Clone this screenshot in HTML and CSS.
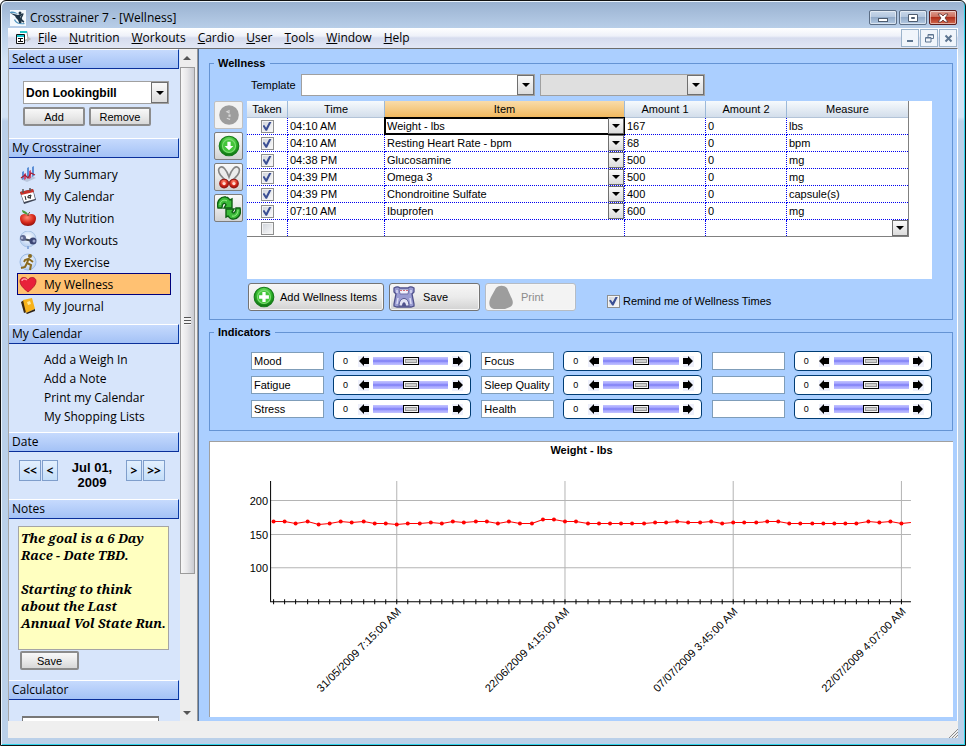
FILE: index.html
```html
<!DOCTYPE html>
<html lang="en">
<head>
    <meta charset="UTF-8">
    <meta name="viewport" content="width=device-width, initial-scale=1.0">
    <title>Crosstrainer 7 - [Wellness]</title>
    <link rel="stylesheet" href="styles.css">
</head>
<body>

    <!-- Shared icon shapes -->
    <svg class="defs" width="0" height="0">
        <defs>
            <symbol id="arrow-left" viewBox="0 0 10 10"><path d="M0 5 5 0v2h5v6H5v2z"/></symbol>
            <symbol id="arrow-right" viewBox="0 0 10 10"><path d="M10 5 5 0v2H0v6h5v2z"/></symbol>
            <radialGradient id="green" cx="50%" cy="30%" r="65%">
                <stop offset="0" stop-color="#8df07c"/>
                <stop offset="0.6" stop-color="#2fb52a"/>
                <stop offset="1" stop-color="#127a14"/>
            </radialGradient>
            <radialGradient id="red" cx="45%" cy="30%" r="70%">
                <stop offset="0" stop-color="#ff8a72"/>
                <stop offset="0.6" stop-color="#d82a1c"/>
                <stop offset="1" stop-color="#8e0f0c"/>
            </radialGradient>
            <radialGradient id="disc" cx="50%" cy="40%" r="60%">
                <stop offset="0" stop-color="#ffffff"/>
                <stop offset="1" stop-color="#b4cdf0"/>
            </radialGradient>
        </defs>
    </svg>

    <div class="window">

        <!-- Title bar -->
        <header class="titlebar">
            <svg class="app-icon" viewBox="0 0 16 16">
                <rect width="16" height="16" fill="#f4f9fd"/>
                <path d="M0 3l8 2 6-2-4 4c2 2 2 4 1 7l-2-1c0-2-1-3-3-5L5 6z" fill="#1f3547"/>
                <path d="M5 9c1 3 4 5 9 4l1 1c-5 1-9 0-11-4zM0 2c3-1 6 0 8 2-3-1-5-1-8-1z" fill="#4f93bd"/>
                <path d="M13 4l-2 4c0 2 1 3 3 4" fill="none" stroke="#1f3547" stroke-width="1.500"/>
                <circle cx="10" cy="3" r="1.500" fill="#1f3547"/>
            </svg>
            <span class="title">Crosstrainer 7 - [Wellness]</span>
            <div class="window-buttons">
                <button type="button" aria-label="Minimize"><svg viewBox="0 0 12 10"><rect x="1.5" y="5.5" width="9" height="3" fill="#fff" stroke="#4d5b6e"/></svg></button>
                <button type="button" aria-label="Maximize"><svg viewBox="0 0 12 10"><path d="M1.5 1.5h9v7h-9z" fill="#fff" stroke="#4d5b6e"/><path d="M4.500 4.500h3v1h-3z" fill="#9db4d0" stroke="#4d5b6e"/></svg></button>
                <button type="button" class="close" aria-label="Close"><svg viewBox="0 0 12 10"><path d="M1 1h3l2 2 2-2h3L8 5l3 4H8L6 7 4 9H1l3-4z" fill="#fff" stroke="#5a3030" stroke-width=".8"/></svg></button>
            </div>
        </header>

        <!-- Menu bar -->
        <nav class="menubar">
            <svg class="form-icon" viewBox="0 0 16 16">
                <path d="M5 1.500h7l1 8-4 1" fill="#fff" stroke="#9a9a9a"/>
                <path d="M5 1h7v2H5z" fill="#1fc4c4"/>
                <path d="M12 6l4 3-4 3z" fill="#b8b8b8"/>
                <path d="M1.500 4.500h8v9h-8z" fill="#fff" stroke="#111"/>
                <path d="M2 5h7v2H2z" fill="#16c7d0"/>
                <path d="M3 8.500h2m-2 3h2M6 8.500h2M6 11.500h2M5.500 8v4" stroke="#111"/>
            </svg>
            <a href="#"><u>F</u>ile</a>
            <a href="#"><u>N</u>utrition</a>
            <a href="#"><u>W</u>orkouts</a>
            <a href="#"><u>C</u>ardio</a>
            <a href="#"><u>U</u>ser</a>
            <a href="#"><u>T</u>ools</a>
            <a href="#"><u>W</u>indow</a>
            <a href="#"><u>H</u>elp</a>
            <div class="child-buttons">
                <button type="button" aria-label="Minimize form"><svg viewBox="0 0 9 9"><path d="M1 7h6" stroke="#5d7590" stroke-width="2"/></svg></button>
                <button type="button" aria-label="Restore form"><svg viewBox="0 0 9 9" fill="none" stroke="#5d7590"><path d="M3 3V.5h5.500v4H6M.500 3.500H6v4.500H.500zM3 1h5M1 4h5"/></svg></button>
                <button type="button" aria-label="Close form"><svg viewBox="0 0 9 9"><path d="M1.500 1.500l6 6m0-6l-6 6" stroke="#5d7590" stroke-width="2"/></svg></button>
            </div>
        </nav>

        <div class="content">

            <!-- Sidebar -->
            <aside class="sidebar">
                <h2>Select a user</h2>
                <section class="user">
                    <div class="combo user-combo">
                        <select aria-label="User"><option>Don Lookingbill</option></select>
                    </div>
                    <div class="user-buttons">
                        <button type="button" class="btn">Add</button>
                        <button type="button" class="btn">Remove</button>
                    </div>
                </section>

                <h2>My Crosstrainer</h2>
                <section class="nav-list">
                    <a href="#">
                        <svg viewBox="0 0 18 18"><path d="M1 14l10-4 6 3-9 4z" fill="#b9c6dc"/><path d="M3 7l2-1v8l-2 1zM8 3l2-1v10l-2 1zM13 2l2-1v10l-2 1z" fill="#5b8fd6"/><path d="M5 9l2-1v6l-2 1zM10 6l2-1v8l-2 1z" fill="#cf4a73"/><path d="M2 13l4-3 3 3 3-5 4 2" fill="none" stroke="#a51f32" stroke-width="1.300"/></svg>
                        My Summary
                    </a>
                    <a href="#">
                        <svg viewBox="0 0 18 18"><path d="M1 5l13-3 3 11-12 4z" fill="#3f4656"/><path d="M2 7l12-3 2 8-11 3z" fill="#fff"/><path d="M1 5l13-3 1 3L2 8z" fill="#c8322b"/><path d="M4 2v4M11 1v3" stroke="#555" stroke-width="1.500"/><path d="M6 9l1 4M9 9l3-1-1 4M9 9v2l2-1" fill="none" stroke="#222"/></svg>
                        My Calendar
                    </a>
                    <a href="#">
                        <svg viewBox="0 0 18 18"><path d="M9 6c3-2 8-1 8 3 0 5-3 8-8 8s-8-3-8-8c0-4 5-5 8-3z" fill="url(#red)"/><path d="M9 6c0-2-2-4-6-5 0 3 3 4 6 5z" fill="#4c9a3a"/><path d="M9 7c0-2 1-3 2-4" fill="none" stroke="#633517"/></svg>
                        My Nutrition
                    </a>
                    <a href="#">
                        <svg viewBox="0 0 18 18"><circle cx="9" cy="8" r="8" fill="url(#disc)" stroke="#aac4e6"/><path d="M4 8l10 2" stroke="#444c58" stroke-width="2"/><circle cx="4" cy="7" r="3" fill="#5d678f"/><circle cx="14" cy="10" r="3.500" fill="#3a4474"/><circle cx="3" cy="7" r="1.300" fill="#abb3d0"/><circle cx="15" cy="10" r="1.500" fill="#9aa4ca"/><path d="M9 15v3" stroke="#8aabdd" stroke-width="2"/></svg>
                        My Workouts
                    </a>
                    <a href="#">
                        <svg viewBox="0 0 18 18"><circle cx="9" cy="9" r="8" fill="url(#disc)" stroke="#9dbce6"/><circle cx="11" cy="3" r="2" fill="#8a6a1e"/><path d="M10 5l-2 5 4 2-1 5M8 10l-2 4-4 1M10 6l4 3M9 6L6 7 5 9" fill="none" stroke="#8a6a1e" stroke-width="2"/></svg>
                        My Exercise
                    </a>
                    <a href="#" class="selected">
                        <svg viewBox="0 0 18 18"><path d="M9 17C4 13 1 10 1 6c0-4 6-5 8-1 2-4 8-3 8 1 0 4-3 7-8 11z" fill="#e8213a" stroke="#a91425" stroke-width=".8"/><path d="M3 6c0-2 3-3 5-1" fill="none" stroke="#ff9ba6" stroke-width="1.500"/></svg>
                        My Wellness
                    </a>
                    <a href="#">
                        <svg viewBox="0 0 18 18"><path d="M2 5l3-2 3 12-3 1z" fill="#3c2a14"/><path d="M4 3l9-2 3 11-9 4z" fill="#f7b21a"/><path d="M7 16l9-4v2l-8 3z" fill="#2c2117"/><path d="M8 5l3-1 1 3-3 1z" fill="#ffe89a"/></svg>
                        My Journal
                    </a>
                </section>

                <h2>My Calendar</h2>
                <section class="link-list">
                    <a href="#">Add a Weigh In</a>
                    <a href="#">Add a Note</a>
                    <a href="#">Print my Calendar</a>
                    <a href="#">My Shopping Lists</a>
                </section>

                <h2>Date</h2>
                <section class="date">
                    <button type="button" class="wide">&lt;&lt;</button>
                    <button type="button">&lt;</button>
                    <strong>Jul 01, 2009</strong>
                    <button type="button">&gt;</button>
                    <button type="button" class="wide">&gt;&gt;</button>
                </section>

                <h2>Notes</h2>
                <section class="notes">
                    <textarea aria-label="Notes">The goal is a 6 Day Race - Date TBD.

Starting to think about the Last Annual Vol State Run.</textarea>
                    <button type="button" class="btn">Save</button>
                </section>

                <h2>Calculator</h2>
                <section class="calculator">
                    <input type="text" aria-label="Calculator">
                </section>
            </aside>

            <div class="scrollbar">
                <span class="scroll-up"></span>
                <div class="thumb"><span class="grip"></span></div>
                <span class="scroll-down"></span>
            </div>

            <!-- Main form -->
            <main class="main">
                <fieldset class="wellness">
                    <legend>Wellness</legend>
                    <div class="template-row">
                        <label for="template">Template</label>
                        <div class="combo template-combo">
                            <select id="template"><option></option></select>
                        </div>
                        <div class="combo disabled-combo">
                            <select aria-label="Template option"><option></option></select>
                        </div>
                    </div>

                    <div class="grid-row">
                        <div class="tools">
                            <button type="button" aria-label="Up" class="tool-off">
                                <svg viewBox="0 0 22 22"><circle cx="11" cy="11" r="9" fill="#9d9d9d"/><path d="M9 8l2-1v2zM11 11h1v1h-1zM9 14l3 1" stroke="#d8d8d8"/></svg>
                            </button>
                            <button type="button" aria-label="Down">
                                <svg viewBox="0 0 22 22"><circle cx="11" cy="11" r="9" fill="url(#green)" stroke="#167a1a"/><circle cx="11" cy="11" r="6" fill="#43c53a" stroke="#7edb74"/><path d="M9.500 7h3v4H15l-4 4-4-4h2.500z" fill="#fff"/></svg>
                            </button>
                            <button type="button" aria-label="Cut">
                                <svg viewBox="0 0 22 22"><path d="M11 16C4 12 0 6 2 3c3-4 7 2 9 8 2-6 6-12 9-8 2 3-2 9-9 13z" fill="#ececec" stroke="#858585" stroke-width="1.500"/><circle cx="6.500" cy="17" r="4" fill="url(#red)" stroke="#961812"/><circle cx="15.500" cy="17" r="4" fill="url(#red)" stroke="#961812"/><circle cx="6.500" cy="17" r="1.500" fill="#ffd9d0"/><circle cx="15.500" cy="17" r="1.500" fill="#ffd9d0"/></svg>
                            </button>
                            <button type="button" aria-label="Refresh">
                                <svg viewBox="0 0 24 24"><path d="M1 12C-1 5 4 0 9 1c2 0 3 2 4 3l2-1v9H7l2-3C8 6 5 7 5 12z" fill="#3dbb3a" stroke="#0d6112" stroke-width="1.400"/><path d="M23 12c2 7-3 12-8 11-2 0-3-2-4-3l-2 1v-8h8l-2 3c1 2 4 1 4-4z" fill="#3dbb3a" stroke="#0d6112" stroke-width="1.400"/><path d="M3 9c0-4 4-6 7-4M21 14c0 4-3 7-6 6" fill="none" stroke="#9af08c"/></svg>
                            </button>
                        </div>

                        <div class="grid-box">
                            <table class="grid">
                                <thead>
                                    <tr>
                                        <th class="col-taken">Taken</th>
                                        <th class="col-time">Time</th>
                                        <th class="col-item">Item</th>
                                        <th class="col-amount">Amount 1</th>
                                        <th class="col-amount">Amount 2</th>
                                        <th class="col-measure">Measure</th>
                                    </tr>
                                </thead>
                                <tbody>
                                    <tr>
                                        <td class="taken"><input type="checkbox" aria-label="Taken" checked></td>
                                        <td>04:10 AM</td>
                                        <td class="current"><div class="combo"><select aria-label="Item"><option>Weight - lbs</option></select></div></td>
                                        <td>167</td><td>0</td><td>lbs</td>
                                    </tr>
                                    <tr>
                                        <td class="taken"><input type="checkbox" aria-label="Taken" checked></td>
                                        <td>04:10 AM</td>
                                        <td><div class="combo"><select aria-label="Item"><option>Resting Heart Rate - bpm</option></select></div></td>
                                        <td>68</td><td>0</td><td>bpm</td>
                                    </tr>
                                    <tr>
                                        <td class="taken"><input type="checkbox" aria-label="Taken" checked></td>
                                        <td>04:38 PM</td>
                                        <td><div class="combo"><select aria-label="Item"><option>Glucosamine</option></select></div></td>
                                        <td>500</td><td>0</td><td>mg</td>
                                    </tr>
                                    <tr>
                                        <td class="taken"><input type="checkbox" aria-label="Taken" checked></td>
                                        <td>04:39 PM</td>
                                        <td><div class="combo"><select aria-label="Item"><option>Omega 3</option></select></div></td>
                                        <td>500</td><td>0</td><td>mg</td>
                                    </tr>
                                    <tr>
                                        <td class="taken"><input type="checkbox" aria-label="Taken" checked></td>
                                        <td>04:39 PM</td>
                                        <td><div class="combo"><select aria-label="Item"><option>Chondroitine Sulfate</option></select></div></td>
                                        <td>400</td><td>0</td><td>capsule(s)</td>
                                    </tr>
                                    <tr>
                                        <td class="taken"><input type="checkbox" aria-label="Taken" checked></td>
                                        <td>07:10 AM</td>
                                        <td><div class="combo"><select aria-label="Item"><option>Ibuprofen</option></select></div></td>
                                        <td>600</td><td>0</td><td>mg</td>
                                    </tr>
                                    <tr>
                                        <td class="taken"><input type="checkbox" aria-label="Taken"></td>
                                        <td></td><td></td><td></td><td></td>
                                        <td><div class="combo"><select aria-label="Measure"><option></option></select></div></td>
                                    </tr>
                                </tbody>
                            </table>
                        </div>
                    </div>

                    <div class="actions">
                        <button type="button" class="action add-items">
                            <svg viewBox="0 0 22 22"><circle cx="11" cy="11" r="9" fill="url(#green)" stroke="#167a1a"/><circle cx="11" cy="11" r="6" fill="#43c53a" stroke="#7edb74"/><path d="M9.500 6.500h3v3h3v3h-3v3h-3v-3h-3v-3h3z" fill="#fff"/></svg>
                            Add Wellness Items
                        </button>
                        <button type="button" class="action">
                            <svg viewBox="0 0 22 22"><path d="M1 2c3-2 5-1 6 0h8c1-1 3-2 6 0v4l-2 2 2 10v2l-3 1H4l-3-1v-2L3 8 1 6z" fill="#9a9cd2" stroke="#50528c" stroke-width="1.300"/><path d="M6 3h10l-1 5H7z" fill="#f1f0fb" stroke="#6f70aa"/><path d="M8 4v1m3-1v1m3-1v1" stroke="#c8434f" stroke-width="1.500"/><path d="M6 20c0-10 10-10 10 0z" fill="#e4e4f5" stroke="#50528c"/><path d="M9 20c0-5 4-5 4 0z" fill="#50528c"/><path d="M4 4v3M18 4v3M5 12l-1 6M17 12l1 6" stroke="#dcdcf4" stroke-width="1.500"/></svg>
                            Save
                        </button>
                        <button type="button" class="action off" disabled>
                            <svg viewBox="0 0 24 24"><path d="M7 3c3-3 8-3 11 0l4 9c3 5 2 9-1 10l-5 2H5c-5-1-6-6-3-12z" fill="#9d9d9d"/></svg>
                            Print
                        </button>
                        <label class="remind"><input type="checkbox" checked> Remind me of Wellness Times</label>
                    </div>
                </fieldset>

                <fieldset class="indicators">
                    <legend>Indicators</legend>
                    <div class="indicator-grid">
                        <div class="indicator">
                            <input type="text" aria-label="Indicator name" value="Mood">
                            <div class="slider"><span>0</span><button type="button" aria-label="Less"><svg><use href="#arrow-left"/></svg></button><input type="range" aria-label="Mood"><button type="button" aria-label="More"><svg><use href="#arrow-right"/></svg></button></div>
                        </div>
                        <div class="indicator">
                            <input type="text" aria-label="Indicator name" value="Focus">
                            <div class="slider"><span>0</span><button type="button" aria-label="Less"><svg><use href="#arrow-left"/></svg></button><input type="range" aria-label="Focus"><button type="button" aria-label="More"><svg><use href="#arrow-right"/></svg></button></div>
                        </div>
                        <div class="indicator">
                            <input type="text" aria-label="Indicator name">
                            <div class="slider"><span>0</span><button type="button" aria-label="Less"><svg><use href="#arrow-left"/></svg></button><input type="range" aria-label="Custom 1"><button type="button" aria-label="More"><svg><use href="#arrow-right"/></svg></button></div>
                        </div>
                        <div class="indicator">
                            <input type="text" aria-label="Indicator name" value="Fatigue">
                            <div class="slider"><span>0</span><button type="button" aria-label="Less"><svg><use href="#arrow-left"/></svg></button><input type="range" aria-label="Fatigue"><button type="button" aria-label="More"><svg><use href="#arrow-right"/></svg></button></div>
                        </div>
                        <div class="indicator">
                            <input type="text" aria-label="Indicator name" value="Sleep Quality">
                            <div class="slider"><span>0</span><button type="button" aria-label="Less"><svg><use href="#arrow-left"/></svg></button><input type="range" aria-label="Sleep Quality"><button type="button" aria-label="More"><svg><use href="#arrow-right"/></svg></button></div>
                        </div>
                        <div class="indicator">
                            <input type="text" aria-label="Indicator name">
                            <div class="slider"><span>0</span><button type="button" aria-label="Less"><svg><use href="#arrow-left"/></svg></button><input type="range" aria-label="Custom 2"><button type="button" aria-label="More"><svg><use href="#arrow-right"/></svg></button></div>
                        </div>
                        <div class="indicator">
                            <input type="text" aria-label="Indicator name" value="Stress">
                            <div class="slider"><span>0</span><button type="button" aria-label="Less"><svg><use href="#arrow-left"/></svg></button><input type="range" aria-label="Stress"><button type="button" aria-label="More"><svg><use href="#arrow-right"/></svg></button></div>
                        </div>
                        <div class="indicator">
                            <input type="text" aria-label="Indicator name" value="Health">
                            <div class="slider"><span>0</span><button type="button" aria-label="Less"><svg><use href="#arrow-left"/></svg></button><input type="range" aria-label="Health"><button type="button" aria-label="More"><svg><use href="#arrow-right"/></svg></button></div>
                        </div>
                        <div class="indicator">
                            <input type="text" aria-label="Indicator name">
                            <div class="slider"><span>0</span><button type="button" aria-label="Less"><svg><use href="#arrow-left"/></svg></button><input type="range" aria-label="Custom 3"><button type="button" aria-label="More"><svg><use href="#arrow-right"/></svg></button></div>
                        </div>
                    </div>
                </fieldset>

                <!-- Chart -->
                <div class="chart">
                    <h3>Weight - lbs</h3>
                    <svg id="plot" viewBox="0 0 742 258"></svg>
                </div>
            </main>
        </div>

        <!-- Status bar -->
        <footer class="statusbar">
            <svg viewBox="0 0 10 10"><path d="M1 10l9-9M4 10l6-6M7 10l3-3" stroke="#8a8a8a"/></svg>
        </footer>
    </div>

    <script>
        const weights = [
            169, 169, 166, 169, 165, 166, 169, 167, 169, 166, 166, 165, 166, 166, 167,
            166, 169, 167, 169, 169, 166, 169, 166, 166, 172, 172, 169, 169, 166, 166,
            166, 166, 166, 166, 167, 167, 169, 167, 167, 169, 166, 167, 167, 167, 169,
            169, 166, 166, 166, 166, 166, 166, 166, 169, 167, 169, 166
        ];
        const dates = {
            11: "31/05/2009 7:15:00 AM",
            26: "22/06/2009 4:15:00 AM",
            41: "07/07/2009 3:45:00 AM",
            56: "22/07/2009 4:07:00 AM"
        };
        const left = 60.5, right = 700, upper = 23, bottom = 143.5;
        const x = i => 63.5 + Math.round(i * 11.2);
        const y = lbs => Math.round(bottom - (lbs - 50) * 0.668) - 0.5;

        let out = "";

        // Grid lines and labels
        [100, 150, 200].forEach(v => {
            out += `<path class="line" d="M${left} ${y(v)}H${right}"/>`;
            out += `<text x="58" y="${y(v) + 4}" text-anchor="end">${v}</text>`;
        });
        for (const i in dates) {
            const px = x(i);
            out += `<path class="line" d="M${px} ${upper}V${bottom}"/>`;
            out += `<text text-anchor="end" transform="translate(${px + 5} 154) rotate(-45)">${dates[i]}</text>`;
        }

        // Axes and ticks
        out += `<path class="axis" d="M${left} ${upper}V${bottom}H${right}"/>`;
        weights.forEach((w, i) => out += `<path class="axis" d="M${x(i)} 141v5"/>`);

        // Weight line
        const points = weights.map((w, i) => `${x(i)},${y(w)}`).join(" ");
        out += `<polyline class="series" points="${points} ${right},${y(167)}"/>`;
        weights.forEach((w, i) => out += `<circle class="dot" cx="${x(i)}" cy="${y(w)}" r="2"/>`);

        document.getElementById("plot").innerHTML = out;
    </script>

</body>
</html>
```

FILE: styles.css
```css
/* General Styles */
* {
    box-sizing: border-box;
}

body {
    margin: 0;
    font: 11px "Liberation Sans", Arial, sans-serif;
    color: #000;
}

button, input, select, textarea {
    font: inherit;
    color: inherit;
    margin: 0;
}

button {
    display: flex;
    align-items: center;
    justify-content: center;
    padding: 0;
}

a {
    color: inherit;
    text-decoration: none;
}

.defs {
    position: absolute;
}

/* Window frame */
.window {
    display: flex;
    flex-direction: column;
    height: 100vh;
    min-height: 746px;
    padding: 0 7px 7px;
    border: 1px solid #111;
    border-radius: 6px 6px 0 0;
    background: linear-gradient(#99b1d0, #b9cfe9 28px, #d3e3f5 60px, #d3e3f5 116px, #bad0e9 120px);
    box-shadow: inset 1px 1px #eaf3fb, inset -1px -1px #2fd3ea;
}

/* Title bar */
.titlebar {
    display: flex;
    align-items: center;
    height: 27px;
    padding: 6px 1px 0 2px;
    font: 12px "Open Sans", sans-serif;
}

.app-icon {
    width: 16px;
    height: 16px;
    margin-right: 4px;
}

.window-buttons {
    display: flex;
    gap: 2px;
    margin-left: auto;
}

.window-buttons button {
    width: 28px;
    height: 15px;
    border: 1px solid #5b6d85;
    border-radius: 2px;
    background: linear-gradient(#c9d8ea, #b3c6de 48%, #92abc9 50%, #b4cae3);
    box-shadow: inset 0 0 0 1px rgba(255, 255, 255, 0.5);
}

.window-buttons .close {
    border-color: #5c1d1d;
    background: linear-gradient(#dd9f93, #cc6a58 48%, #b02f1b 50%, #d0694f);
}

.window-buttons svg {
    width: 12px;
    height: 10px;
}

/* Menu bar */
.menubar {
    display: flex;
    align-items: center;
    gap: 12px;
    height: 20px;
    padding: 0 1px 0 7px;
    background: linear-gradient(#fff, #eef1f9 40%, #d6dcee 50%, #e2e7f5);
    font: 12px/18px "Open Sans", sans-serif;
}

.form-icon {
    width: 16px;
    height: 16px;
    margin-right: -5px;
}

.child-buttons {
    display: flex;
    gap: 1px;
    margin-left: auto;
}

.child-buttons button {
    width: 18px;
    height: 18px;
    border: 1px solid #9bb3cb;
    background: #f0f5fb;
}

.child-buttons svg {
    width: 9px;
    height: 9px;
}

/* Content */
.content {
    display: flex;
    flex: 1;
    min-height: 0;
    border: 1px solid #a5a5a5;
    border-top-color: #6d6d6d;
    border-right-color: #fff;
    border-bottom: 0;
}

/* Sidebar */
.sidebar {
    width: 171px;
    overflow: hidden;
    background: #d7e5fb;
    font: 12px "Open Sans", sans-serif;
}

.sidebar h2 {
    height: 20px;
    margin: 0 1px 0 0;
    padding-left: 3px;
    border: 1px solid #fff;
    border-width: 1px 1px 1px 0;
    border-color: #fff #0a3aa5 #0a2f9a;
    background: linear-gradient(#c6dafd, #a4c2f6);
    font: 12px/18px "Open Sans", sans-serif;
}

.sidebar section a {
    display: flex;
    align-items: center;
}

.user {
    height: 69px;
    padding: 12px 11px 12px 14px;
}

/* Drop-downs, with the arrow button laid over the right end */
.combo {
    display: grid;
    grid-template-columns: 1fr 17px;
    border: 1px solid #a0a0a0;
}

.combo select {
    grid-area: 1 / 1 / 2 / 3;
    min-width: 0;
    padding: 0 2px;
    border: 0;
    border-radius: 0;
    background: #fff;
    appearance: none;
}

.combo::before {
    content: "";
    grid-area: 1 / 2;
    z-index: 1;
    border: 1px solid #6f6f6f;
    background: linear-gradient(#fafafa, #dcdcdc);
    pointer-events: none;
}

.combo::after {
    content: "";
    grid-area: 1 / 2;
    z-index: 2;
    place-self: center;
    border: 4px solid transparent;
    border-top-color: #000;
    border-bottom: 0;
    pointer-events: none;
}

.user-combo {
    height: 23px;
    font: bold 12px "Liberation Sans", Arial, sans-serif;
}

.user-buttons {
    display: flex;
    gap: 4px;
    margin-top: 3px;
}

.btn {
    width: 62px;
    height: 19px;
    border: 2px solid #8c8c8c;
    border-radius: 2px;
    background: linear-gradient(#f8f8f8, #eaeaea 50%, #d8d8d8);
    font: 11px "Liberation Sans", Arial, sans-serif;
}

.nav-list {
    padding: 5px 9px 7px 8px;
}

.nav-list a {
    gap: 7px;
    height: 22px;
    padding-left: 1px;
    border: 1px solid transparent;
}

.nav-list svg {
    width: 18px;
    height: 18px;
}

.nav-list .selected {
    border-color: #00007c;
    background: #ffc172;
}

.link-list {
    padding: 6px 0 6px 35px;
}

.link-list a {
    height: 19px;
}

.date {
    display: flex;
    gap: 1px;
    height: 47px;
    padding: 8px 15px 0 10px;
}

.date button {
    width: 16px;
    height: 21px;
    border: 1px solid #7f9ecb;
    background: linear-gradient(#e3f0fe, #c4def9);
    font: bold 12px "Open Sans", sans-serif;
}

.date .wide {
    width: 22px;
}

.date strong {
    flex: 1;
    padding: 0 8px;
    font: bold 13px/15px "Liberation Sans", Arial, sans-serif;
    text-align: center;
}

.notes {
    height: 161px;
    padding: 7px 11px 0 9px;
}

.notes textarea {
    display: block;
    width: 100%;
    height: 124px;
    padding: 3px 2px;
    border: 1px solid #a5a5a5;
    outline: 0;
    overflow: hidden;
    resize: none;
    background: #ffffc0;
    font: italic bold 13px/17px "Noto Serif", "Liberation Serif", serif;
}

.notes .btn {
    width: 59px;
    margin: 1px 0 0 2px;
}

.calculator {
    padding: 16px 21px 0 13px;
}

.calculator input {
    width: 100%;
    border: 1px solid #777;
    border-top-width: 2px;
}

/* Scrollbar */
.scrollbar {
    display: flex;
    flex-direction: column;
    align-items: center;
    width: 18px;
    padding: 7px 3px 6px 0;
    border-right: 1px solid #9a9a9a;
    background: #ededed;
}

.scroll-up, .scroll-down {
    border: 4px solid transparent;
}

.scroll-up {
    border-top: 0;
    border-bottom-color: #555;
}

.scroll-down {
    margin-top: auto;
    border-bottom: 0;
    border-top-color: #555;
}

.thumb {
    display: flex;
    align-items: center;
    justify-content: center;
    width: 15px;
    height: 77%;
    margin-top: 7px;
    border: 1px solid #9b9b9b;
    background: linear-gradient(90deg, #f7f7f7, #e8e8ea 45%, #c9cbd1);
}

.grip {
    width: 7px;
    height: 8px;
    background: repeating-linear-gradient(#555 0 1px, #f5f5f5 1px 3px);
}

/* Main form */
.main {
    display: flex;
    flex: 1;
    flex-direction: column;
    min-width: 0;
    padding: 7px 4px 4px 10px;
    border-left: 1px solid #4e6d97;
    background: #abcfff;
}

fieldset {
    min-width: 0;
    margin: 0;
    border: 1px solid #6594d4;
}

legend {
    height: 14px;
    padding: 0 4px;
    font-weight: bold;
    line-height: 14px;
}

.wellness {
    padding: 4px 20px 8px 4px;
}

.template-row {
    display: flex;
    align-items: center;
    padding-left: 37px;
}

.template-row label {
    width: 50px;
}

.template-row .combo {
    height: 22px;
}

.template-combo {
    width: 234px;
    margin-right: 5px;
}

.disabled-combo {
    width: 165px;
}

.disabled-combo select {
    background: #dfdfdf;
}

.grid-row {
    display: flex;
    gap: 4px;
    margin-top: 5px;
}

/* Tool buttons */
.tools {
    display: flex;
    flex-direction: column;
    gap: 3px;
}

.tools button {
    width: 29px;
    height: 28px;
    border: 1px solid #7d7d7d;
    border-radius: 2px;
    background: linear-gradient(#f9f9f9, #e9e9e9 50%, #d2d2d2);
}

.tools .tool-off {
    border-color: #c0c0c0;
    background: #f2f2f2;
}

.tools svg {
    width: 24px;
    height: 24px;
}

/* Grid */
.grid-box {
    flex: 1;
    height: 178px;
    padding-right: 23px;
    background: #fff;
}

.grid {
    width: 100%;
    table-layout: fixed;
    border-collapse: separate;
    border-spacing: 0;
    border-right: 1px solid #808080;
    border-bottom: 1px solid #808080;
}

.grid th {
    height: 17px;
    padding: 0;
    border-right: 1px solid #9db9d8;
    border-bottom: 1px solid #b3c4d8;
    background: linear-gradient(#f6fafd, #d3deeb);
    font-weight: normal;
}

.grid th:last-child, .grid td:last-child {
    border-right: 0;
}

.grid .col-item {
    background: linear-gradient(#f9dcaa, #f1b95f);
}

.col-taken {
    width: 41px;
}

.col-time {
    width: 97px;
}

.col-amount {
    width: 81px;
}

.col-measure {
    width: 121px;
}

.grid td {
    height: 17px;
    padding: 0 2px;
    border-right: 1px dotted #0000f0;
    border-bottom: 1px dotted #0000f0;
}

.grid tr:last-child td {
    height: 16px;
    border-bottom: 0;
}

.grid .taken {
    padding: 0;
    text-align: center;
}

.grid td:has(.combo) {
    padding: 0;
}

.grid .combo {
    grid-template-columns: 1fr 16px;
    height: 16px;
    border: 0;
}

.grid .current .combo {
    outline: 2px solid #000;
    outline-offset: -1px;
}

/* Tick boxes */
input[type="checkbox"] {
    display: inline-grid;
    place-content: center;
    width: 13px;
    height: 13px;
    border: 1px solid #8e8f8f;
    background: linear-gradient(135deg, #cfd3da, #fbfbfb);
    box-shadow: inset 0 0 0 1px #f4f4f4;
    vertical-align: middle;
    appearance: none;
}

input[type="checkbox"]:checked::before {
    content: "";
    width: 9px;
    height: 9px;
    background: #3b4f94;
    clip-path: polygon(0 45%, 20% 35%, 40% 65%, 75% 0, 100% 0, 50% 100%, 35% 100%);
}

/* Action buttons */
.actions {
    display: flex;
    align-items: center;
    gap: 5px;
    margin-top: 4px;
    padding-left: 34px;
}

.action {
    justify-content: flex-start;
    gap: 8px;
    width: 91px;
    height: 28px;
    padding-left: 3px;
    border: 1px solid #747474;
    border-radius: 3px;
    background: linear-gradient(#f6f6f6, #ebebeb 50%, #d2d2d2);
    box-shadow: inset 0 0 0 1px #f6f6f6;
}

.action svg {
    width: 22px;
    height: 22px;
}

.add-items {
    gap: 4px;
    width: 136px;
}

.add-items svg, .off svg {
    width: 24px;
    height: 24px;
}

.off {
    border-color: #b6bcc4;
    background: #f3f3f3;
    color: #8b8b8b;
}

.remind {
    display: flex;
    align-items: center;
    gap: 3px;
    margin: 8px 0 0 26px;
}

/* Indicators */
.indicators {
    margin-top: 5px;
    padding: 12px 20px 11px 4px;
}

.indicator-grid {
    display: grid;
    grid-template-columns: repeat(3, minmax(0, 1fr));
    gap: 4px 10px;
    padding-left: 37px;
}

.indicator {
    display: flex;
    align-items: center;
    gap: 9px;
}

.indicator input[type="text"] {
    width: 73px;
    height: 18px;
    padding: 0 2px;
    border: 1px solid #7f9db9;
    background: #fff;
}

.slider {
    display: flex;
    flex: 1;
    align-items: center;
    min-width: 0;
    height: 20px;
    padding: 0 7px 0 9px;
    border: 1px solid #003c74;
    border-radius: 4px;
    background: #fff;
}

.slider span {
    width: 15px;
    font-size: 9px;
}

.slider button {
    width: 11px;
    height: 11px;
    border: 0;
    background: #eef0fb;
}

.slider svg {
    width: 10px;
    height: 10px;
}

.slider input {
    flex: 1;
    min-width: 0;
    height: 8px;
    margin: 0 4px;
    background: linear-gradient(#c4c4ff, #a6a6ff 30%, #7c7cf4 50%, #a6a6ff 70%, #c4c4ff);
    appearance: none;
}

.slider input::-webkit-slider-thumb {
    width: 16px;
    height: 8px;
    border: 1px solid #000;
    background: #d0d0d0;
    box-shadow: inset 0 0 0 1px #f4f4f4, inset 0 0 0 2px #9a9a9a;
    appearance: none;
}

/* Chart */
.chart {
    flex: 1;
    min-height: 0;
    margin-top: 10px;
    border: 1px solid #a0a0a0;
    border-width: 1px 0 0 1px;
    background: #fff;
}

.chart h3 {
    margin: 0;
    font-size: 11px;
    line-height: 16px;
    text-align: center;
}

.chart svg {
    display: block;
    width: 100%;
    font-size: 11px;
}

.line {
    stroke: #b4b4b4;
}

.axis {
    fill: none;
    stroke: #000;
}

.series {
    fill: none;
    stroke: #f00;
}

.dot {
    fill: #f00;
}

/* Status bar */
.statusbar {
    display: flex;
    align-items: flex-end;
    justify-content: flex-end;
    height: 17px;
    background: #efefef;
}

.statusbar svg {
    width: 10px;
    height: 10px;
}
```
